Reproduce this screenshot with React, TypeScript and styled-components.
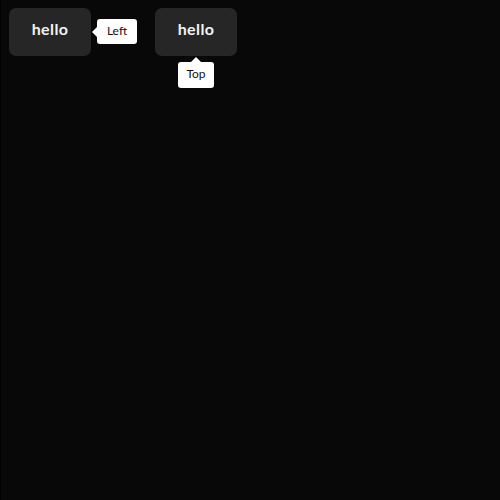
import * as React from 'react';
import styled, {createGlobalStyle} from "styled-components";

const GlobalStyle = createGlobalStyle`
  html, body {
    margin: 0;
    padding: 0;
    background: #080808;
  }
  body {
    font-family: Lato, "Open Sans", sans-serif;
  }
  #root {
    min-height: 100vh;
    border-left: 1px solid #000;
  }
`;

const Page = styled.div`
  display: flex;
  gap: 64px;
  padding: 8px 0 0 8px;
`;

const Anchor = styled.div`
  position: relative;
`;

const Button = styled.button`
  width: 82px;
  height: 48px;
  padding: 0 0 7px;
  border: none;
  border-radius: 7px;
  background: #262626;
  color: #f2f2f2;
  font-family: Lato, "Open Sans", sans-serif;
  font-size: 16px;
  font-weight: 700;
  letter-spacing: 0.4px;
  cursor: pointer;
`;

type Placement = 'right' | 'bottom';

const Tip = styled.div<{ $placement: Placement }>`
  position: absolute;
  box-sizing: border-box;
  padding-bottom: 3px;
  background: #fff;
  color: #111;
  font-size: 12px;
  border-radius: 3px;
  display: flex;
  align-items: center;
  justify-content: center;
  white-space: nowrap;
  ${p => p.$placement === 'right' ? `
    left: calc(100% + 6px);
    top: 11px;
    width: 40px;
    height: 25px;
  ` : `
    top: calc(100% + 6px);
    left: 23px;
    width: 36px;
    height: 26px;
  `}

  &::before {
    content: '';
    position: absolute;
    border: 5px solid transparent;
    ${p => p.$placement === 'right' ? `
      right: 100%;
      top: 50%;
      margin-top: -5px;
      border-right-color: #fff;
    ` : `
      bottom: 100%;
      left: 50%;
      margin-left: -5px;
      border-bottom-color: #fff;
    `}
  }
`;

interface IProps {
    label: string,
    tip: string,
    placement: Placement
}

const TooltipButton = ({label, tip, placement}: IProps) => (
    <Anchor>
        <Button>{label}</Button>
        <Tip $placement={placement}>{tip}</Tip>
    </Anchor>
);

export default function App() {
    return (
        <>
            <GlobalStyle/>
            <Page>
                <TooltipButton label="hello" tip="Left" placement="right"/>
                <TooltipButton label="hello" tip="Top" placement="bottom"/>
            </Page>
        </>
    );
}
